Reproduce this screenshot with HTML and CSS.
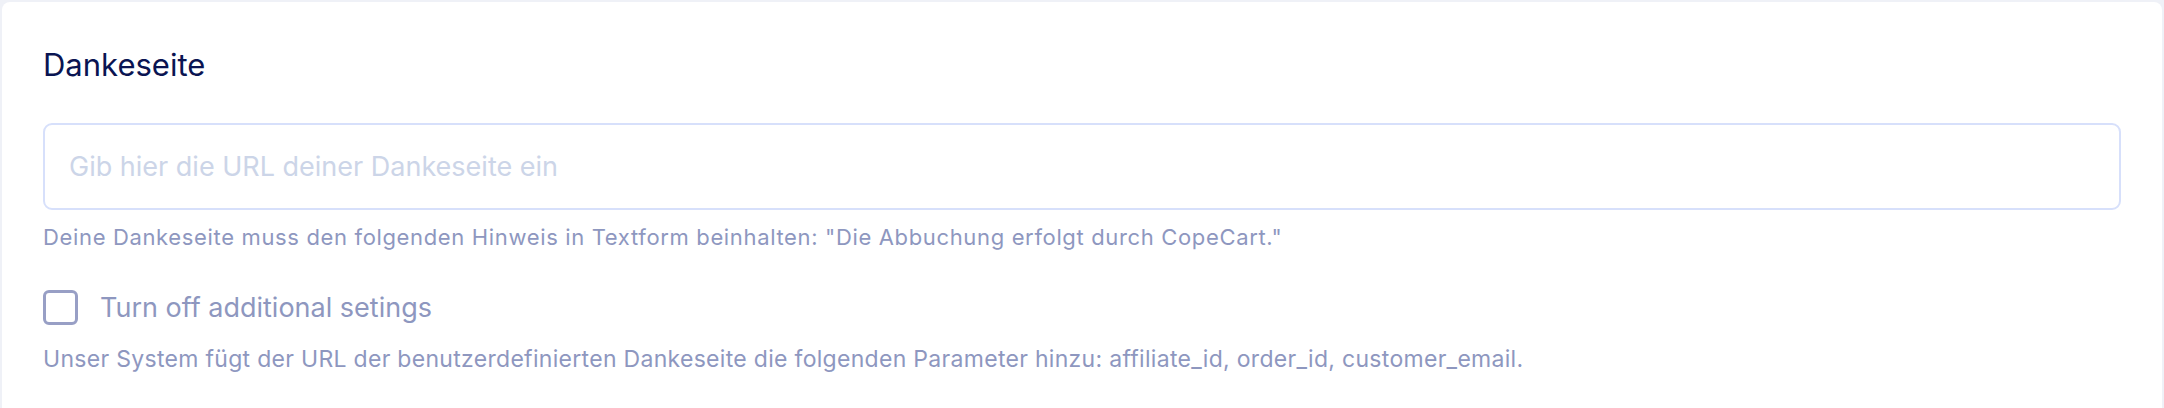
FILE: index.html
```html
<!DOCTYPE html>
<html lang="de">
<head>
<meta charset="utf-8">
<title>Dankeseite</title>
<link rel="stylesheet" href="styles.css">
</head>
<body>
<div class="page">
  <section class="card">
    <h2 class="title">Dankeseite</h2>
    <input class="url-input" type="text" placeholder="Gib hier die URL deiner Dankeseite ein">
    <p class="hint hint-first">Deine Dankeseite muss den folgenden Hinweis in Textform beinhalten: "Die Abbuchung erfolgt durch CopeCart."</p>
    <label class="check-row">
      <span class="checkbox"></span>
      <span class="check-label">Turn off additional setings</span>
    </label>
    <p class="hint hint-second">Unser System fügt der URL der benutzerdefinierten Dankeseite die folgenden Parameter hinzu: affiliate_id, order_id, customer_email.</p>
  </section>
</div>
</body>
</html>
```
FILE: styles.css
```css
* { box-sizing: border-box; }
html, body {
  margin: 0;
  height: 100%;
  background: #eff1f7;
  font-family: Inter, "Noto Sans", "DejaVu Sans", sans-serif;
}
.page {
  padding: 2px 2px 0 2px;
  height: 100%;
}
.card {
  background: #ffffff;
  border-radius: 8px 8px 0 0;
  height: 100%;
  padding: 45px 41px 0 41px;
  display: flex;
  flex-direction: column;
}
.title {
  margin: 0;
  font-size: 31px;
  line-height: 36px;
  font-weight: 400;
  color: #0a1452;
}
.url-input {
  margin-top: 40px;
  height: 87px;
  width: 100%;
  border: 2px solid #d7e0fb;
  border-radius: 9px;
  padding: 0 24px;
  font-family: inherit;
  font-size: 27px;
  color: #0b1657;
  outline: none;
  background: #fff;
}
.url-input::placeholder {
  color: #ccd5e8;
}
.hint {
  margin: 0;
  font-size: 22px;
  line-height: 28px;
  letter-spacing: 0.3px;
  color: #8e97bf;
}
.hint-first {
  margin-top: 13px;
  letter-spacing: 0.65px;
}
.check-row {
  display: flex;
  align-items: center;
  gap: 22px;
  margin-top: 39px;
}
.checkbox {
  width: 35px;
  height: 35px;
  border: 3px solid #989fc5;
  border-radius: 6px;
  flex: none;
}
.check-label {
  font-size: 27px;
  line-height: 35px;
  color: #8e97bf;
}
.hint-second {
  margin-top: 20px;
  font-size: 23px;
}
```
